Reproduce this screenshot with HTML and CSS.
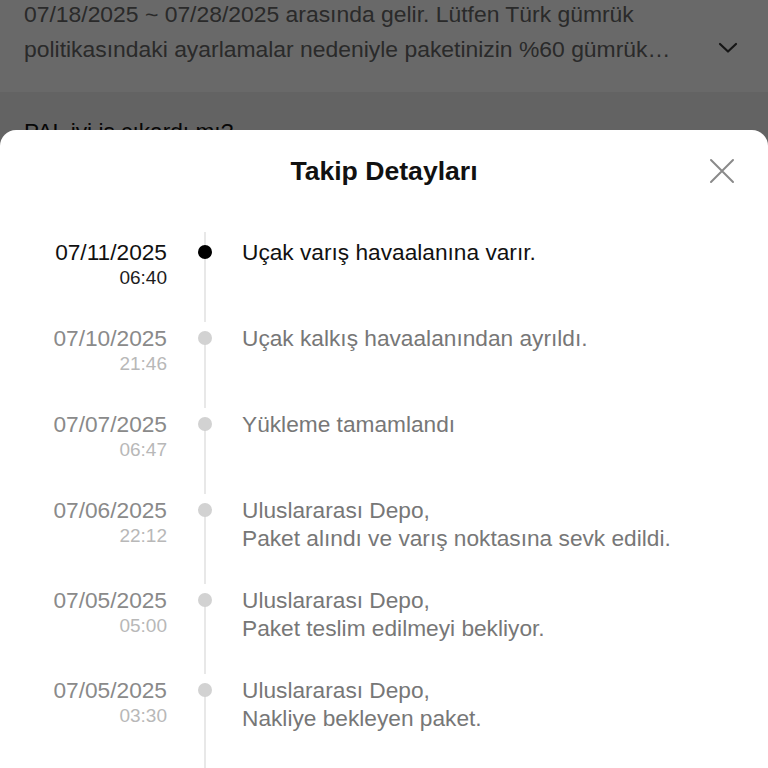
FILE: index.html
```html
<!DOCTYPE html>
<html lang="tr">
<head>
<meta charset="utf-8">
<title>Takip Detayları</title>
<link rel="stylesheet" href="styles.css">
</head>
<body>
<div class="page">
  <div class="notice">
    <p class="notice-text">07/18/2025 ~ 07/28/2025 arasında gelir. Lütfen Türk gümrük<br>politikasındaki ayarlamalar nedeniyle paketinizin %60 gümrük…</p>
    <svg class="chevron" width="20" height="12" viewBox="0 0 20 12"><polyline points="2,2 10,9.5 18,2" fill="none" stroke="#333" stroke-width="2.2" stroke-linecap="round" stroke-linejoin="round"/></svg>
  </div>
  <p class="question">PAL iyi iş çıkardı mı?</p>
</div>
<div class="overlay"></div>
<div class="sheet">
  <div class="sheet-header">
    <h1 class="sheet-title">Takip Detayları</h1>
    <svg class="close" width="26" height="26" viewBox="0 0 26 26"><path d="M2 2 L24 24 M24 2 L2 24" stroke="#8a8a8a" stroke-width="2" stroke-linecap="round"/></svg>
  </div>
  <ul class="timeline">
    <li class="item active first">
      <div class="when"><div class="date">07/11/2025</div><div class="time">06:40</div></div>
      <div class="mark"><span class="dot"></span></div>
      <div class="desc">Uçak varış havaalanına varır.</div>
    </li>
    <li class="item">
      <div class="when"><div class="date">07/10/2025</div><div class="time">21:46</div></div>
      <div class="mark"><span class="dot"></span></div>
      <div class="desc">Uçak kalkış havaalanından ayrıldı.</div>
    </li>
    <li class="item">
      <div class="when"><div class="date">07/07/2025</div><div class="time">06:47</div></div>
      <div class="mark"><span class="dot"></span></div>
      <div class="desc">Yükleme tamamlandı</div>
    </li>
    <li class="item">
      <div class="when"><div class="date">07/06/2025</div><div class="time">22:12</div></div>
      <div class="mark"><span class="dot"></span></div>
      <div class="desc">Uluslararası Depo,<br>Paket alındı ve varış noktasına sevk edildi.</div>
    </li>
    <li class="item">
      <div class="when"><div class="date">07/05/2025</div><div class="time">05:00</div></div>
      <div class="mark"><span class="dot"></span></div>
      <div class="desc">Uluslararası Depo,<br>Paket teslim edilmeyi bekliyor.</div>
    </li>
    <li class="item last">
      <div class="when"><div class="date">07/05/2025</div><div class="time">03:30</div></div>
      <div class="mark"><span class="dot"></span></div>
      <div class="desc">Uluslararası Depo,<br>Nakliye bekleyen paket.</div>
    </li>
  </ul>
</div>
</body>
</html>
```

FILE: styles.css
```css
html, body {
  margin: 0;
  padding: 0;
}
body {
  width: 768px;
  height: 768px;
  overflow: hidden;
  position: relative;
  font-family: "Liberation Sans", Arial, sans-serif;
  background: #f0f0f0;
}
.page {
  background: #f0f0f0;
  height: 768px;
}
.notice {
  background: #ffffff;
  height: 92px;
  padding: 0 24px;
  display: flex;
  align-items: flex-start;
  gap: 12px;
  box-sizing: border-box;
}
.notice-text {
  margin: -3px 0 0 0;
  font-size: 22.9px;
  line-height: 35px;
  color: #666;
  flex: 1;
  white-space: nowrap;
}
.chevron {
  margin-top: 42px;
  margin-right: 6px;
  flex: none;
}
.question {
  margin: 24px 0 0 0;
  padding: 0 24px;
  font-size: 22.7px;
  line-height: 30px;
  color: #111;
}
.overlay {
  position: absolute;
  inset: 0;
  background: rgba(0, 0, 0, 0.59);
}
.sheet {
  position: absolute;
  top: 130px;
  left: 0;
  right: 0;
  bottom: 0;
  background: #fff;
  border-radius: 16px 16px 0 0;
  overflow: hidden;
}
.sheet-header {
  height: 82px;
  display: flex;
  align-items: center;
  justify-content: center;
  position: relative;
}
.sheet-title {
  margin: 0;
  font-size: 26.6px;
  font-weight: bold;
  color: #111;
}
.close {
  position: absolute;
  right: 33px;
  top: 28px;
}
.timeline {
  list-style: none;
  margin: 0;
  padding: 26px 0 0 0;
}
.item {
  display: grid;
  grid-template-columns: 167px 76px 1fr;
  padding-bottom: 34px;
  position: relative;
}
.item::before {
  content: "";
  position: absolute;
  left: 204px;
  width: 2px;
  top: 14px;
  bottom: 2px;
  background: #e8e8e8;
}
.item.first::before {
  top: -6px;
}
.item.last::before {
  bottom: -200px;
}
.when {
  text-align: right;
}
.date {
  font-size: 22.7px;
  line-height: 28px;
  color: #8a8a8a;
}
.time {
  font-size: 19px;
  line-height: 24px;
  color: #b8b8b8;
}
.mark {
  display: flex;
  justify-content: center;
  position: relative;
  z-index: 1;
}
.dot {
  width: 14px;
  height: 14px;
  border-radius: 50%;
  background: #d2d2d2;
  margin-top: 7px;
}
.desc {
  font-size: 22.7px;
  line-height: 28px;
  color: #777;
  margin-left: -1px;
}
.active .date { color: #111; }
.active .time { color: #1c1c1c; }
.active .dot { background: #000; }
.active .desc { color: #111; }
```
